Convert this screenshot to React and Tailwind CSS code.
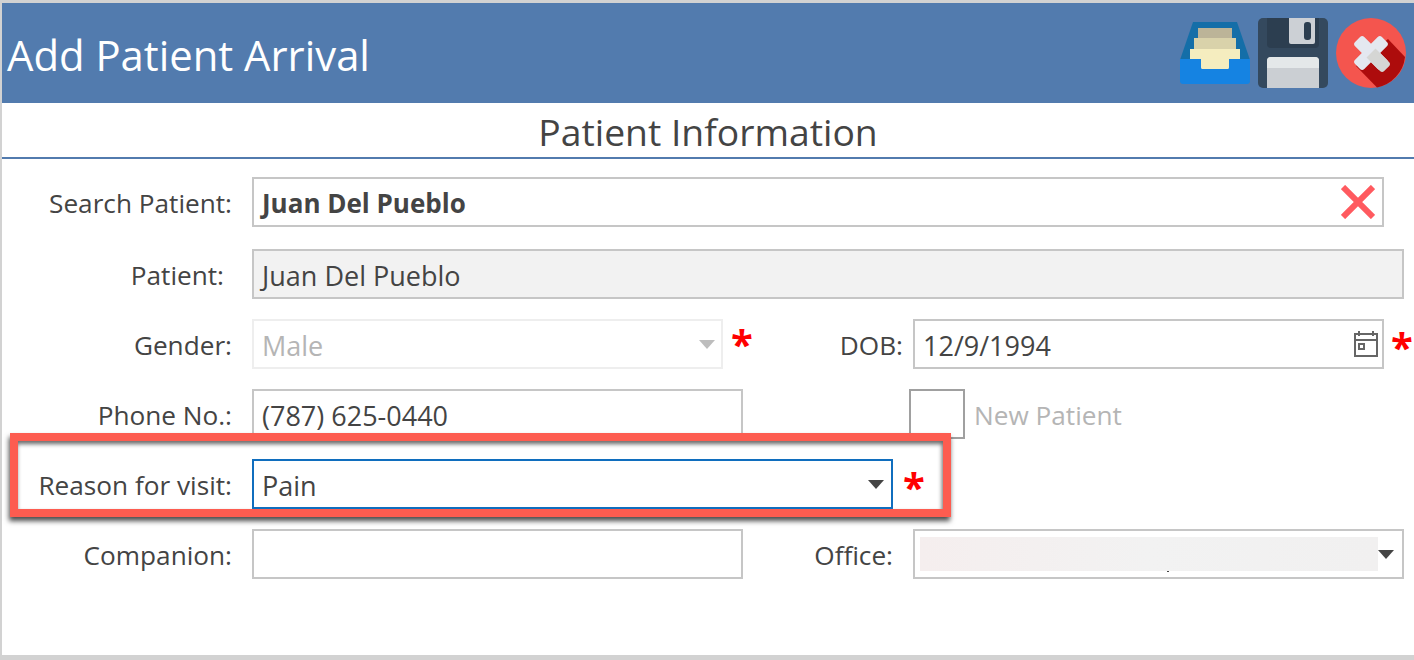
import React from "react";

const font = "font-['Open_Sans','Noto_Sans',sans-serif]";

function InboxIcon() {
  return (
    <svg width="70" height="62" viewBox="0 0 70 62">
      <path d="M13 0H57L70 38H0Z" fill="#146ea8" />
      <rect x="18" y="6" width="34" height="11" fill="#bcb498" />
      <rect x="14" y="16" width="42" height="12" fill="#d9d2aa" />
      <path d="M0 37H70V59a3 3 0 0 1-3 3H3a3 3 0 0 1-3-3Z" fill="#1583e2" />
      <path d="M10 27H60V37H49V45.500a1.500 1.500 0 0 1-1.500 1.500H22.500a1.500 1.500 0 0 1-1.500-1.500V37H10Z" fill="#f5edbf" />
    </svg>
  );
}

function SaveIcon() {
  return (
    <svg width="70" height="70" viewBox="0 0 70 70">
      <rect width="70" height="70" rx="5" fill="#34495e" />
      <path d="M9 0H61V26a4 4 0 0 1-4 4H13a4 4 0 0 1-4-4Z" fill="#2c3e50" />
      <path d="M31 0H57V24a2 2 0 0 1-2 2H33a2 2 0 0 1-2-2Z" fill="#ccd0d5" />
      <rect x="46" y="4" width="7" height="18" rx="3" fill="#2c3e50" />
      <path d="M13 39H57a4 4 0 0 1 4 4V70H9V43a4 4 0 0 1 4-4Z" fill="#cbcfd3" />
      <path d="M13 39H57a4 4 0 0 1 4 4V50H9V43a4 4 0 0 1 4-4Z" fill="#e4e8e9" />
    </svg>
  );
}

function CloseIcon() {
  return (
    <svg width="70" height="70" viewBox="0 0 70 70">
      <circle cx="35" cy="35" r="35" fill="#f4554e" />
      <path d="M52 21L69 39A35 35 0 0 1 41 69.500L20 48Z" fill="#ad0c0c" />
      <rect x="16" y="28.500" width="38" height="13" rx="3" fill="#e4e8f0" transform="rotate(45 35 35)" />
      <rect x="16" y="28.500" width="38" height="13" rx="3" fill="#e4e8f0" transform="rotate(-45 35 35)" />
      <path d="M39.500 30.500L53 44a3 3 0 0 1 0 4.200L48.200 53a3 3 0 0 1-4.200 0L30.500 39.500Z" fill="#d5d6d4" />
    </svg>
  );
}

function Caret({ color = "#444444" }) {
  return (
    <svg width="16" height="9" viewBox="0 0 16 9" className="shrink-0">
      <path d="M0 0H16L8 9Z" fill={color} />
    </svg>
  );
}

function Star({ className = "" }) {
  return (
    <span className={`text-[#ff0000] font-bold text-[40px] leading-none h-[30px] shrink-0 -translate-y-[2px] ${className}`}>*</span>
  );
}

function Label({ children, className = "w-[230px]" }) {
  return <div className={`text-right text-[26.200px] text-[#444444] shrink-0 pt-[4px] ${className}`}>{children}</div>;
}

export default function App() {
  return (
    <div className={`h-[660px] bg-[#d2d2d2] pt-[3px] pl-[2px] pb-[5px] overflow-hidden ${font}`}>
      <div className="h-full bg-white flex flex-col">
        <div className="h-[100px] bg-[#527bae] flex items-center justify-between pl-[5px] pr-[8px] shrink-0">
          <h1 className="text-[41.800px] text-white font-normal pt-[4px]">Add Patient Arrival</h1>
          <div className="flex items-start gap-[8px]">
            <div className="pt-[4px]"><InboxIcon /></div>
            <SaveIcon />
            <CloseIcon />
          </div>
        </div>

        <div className="h-[56px] border-b-2 border-[#527bae] text-center text-[37.300px] leading-[57px] text-[#444444] shrink-0">
          Patient Information
        </div>

        <div className="flex flex-col gap-[20px] pt-[18px]">
          <div className="flex items-center h-[50px] mb-[2px]">
            <Label>Search Patient:</Label>
            <div className="ml-[20px] w-[1132px] h-[50px] border-2 border-[#c6c6c6] flex items-center justify-between pl-[8px] pr-[7px]">
              <span className="text-[26px] font-bold text-[#444444] pt-[2px]">Juan Del Pueblo</span>
              <svg width="34" height="34" viewBox="0 0 34 34">
                <path d="M2 2L32 32M32 2L2 32" stroke="#ff5a5f" strokeWidth="6" />
              </svg>
            </div>
          </div>

          <div className="flex items-center h-[50px]">
            <Label className="w-[230px] pr-[8px]">Patient:</Label>
            <div className="ml-[20px] w-[1152px] h-[50px] border-2 border-[#c6c6c6] bg-[#f2f2f2] flex items-center pl-[8px] pt-[4px] text-[27px] text-[#444444]">
              Juan Del Pueblo
            </div>
          </div>

          <div className="flex items-center h-[50px]">
            <Label>Gender:</Label>
            <div className="ml-[20px] w-[471px] h-[50px] border-2 border-[#eeeeee] flex items-center justify-between pl-[8px] pr-[6px] text-[27px] text-[#b5b5b5] shrink-0">
              <span className="pt-[4px]">Male</span>
              <Caret color="#bdbdbd" />
            </div>
            <div className="ml-[8px] w-[22px] shrink-0"><Star /></div>
            <Label className="w-[150px]">DOB:</Label>
            <div className="ml-[10px] w-[471px] h-[50px] border-2 border-[#c6c6c6] flex items-center justify-between pl-[8px] pr-[4px] text-[27px] text-[#444444] shrink-0">
              <span className="pt-[4px]">12/9/1994</span>
              <svg width="24" height="26" viewBox="0 0 24 26" fill="none" stroke="#666666" strokeWidth="2">
                <rect x="1" y="3" width="22" height="22" />
                <path d="M1 9H23M5 0V5M19 0V5" />
                <rect x="5" y="13" width="5" height="5" />
              </svg>
            </div>
            <Star className="ml-[7px]" />
          </div>

          <div className="flex items-center h-[50px]">
            <Label>Phone No.:</Label>
            <div className="ml-[20px] w-[491px] h-[50px] border-2 border-[#c6c6c6] flex items-center pl-[8px] pt-[4px] text-[27px] text-[#444444] shrink-0">
              (787) 625-0440
            </div>
            <div className="ml-[166px] w-[56px] h-[50px] border-2 border-[#a0a0a0] shrink-0" />
            <span className="ml-[9px] text-[26.200px] text-[#b5b5b5] pt-[4px]">New Patient</span>
          </div>

          <div className="relative flex items-center h-[50px]">
            <div className="absolute left-[8px] -top-[26px] w-[941px] h-[84px] border-[8px] border-[#fd5c50] shadow-[-1px_4px_5px_rgba(0,0,0,0.7),inset_-1px_3px_4px_rgba(0,0,0,0.6)]" />
            <Label className="w-[230px] relative">Reason for visit:</Label>
            <div className="relative ml-[20px] w-[641px] h-[50px] border-2 border-[#106ebe] flex items-center justify-between pl-[8px] pr-[7px] text-[27px] text-[#444444] shrink-0">
              <span className="pt-[4px]">Pain</span>
              <Caret />
            </div>
            <Star className="ml-[10px] relative" />
          </div>

          <div className="flex items-center h-[50px]">
            <Label>Companion:</Label>
            <div className="ml-[20px] w-[491px] h-[50px] border-2 border-[#c6c6c6] shrink-0" />
            <Label className="w-[150px]">Office:</Label>
            <div className="ml-[20px] w-[491px] h-[50px] border-2 border-[#c6c6c6] flex items-center justify-between pl-[5px] pr-[8px] shrink-0">
              <div className="relative w-[458px] h-[34px] bg-gradient-to-r from-[#f5eeee] via-[#f2f2f2] to-[#f1f0f0] blur-[0.5px]">
                <span className="absolute left-[247px] -bottom-[1px] w-[2px] h-[1px] bg-[#444444]" />
              </div>
              <Caret />
            </div>
          </div>
        </div>
      </div>
    </div>
  );
}
